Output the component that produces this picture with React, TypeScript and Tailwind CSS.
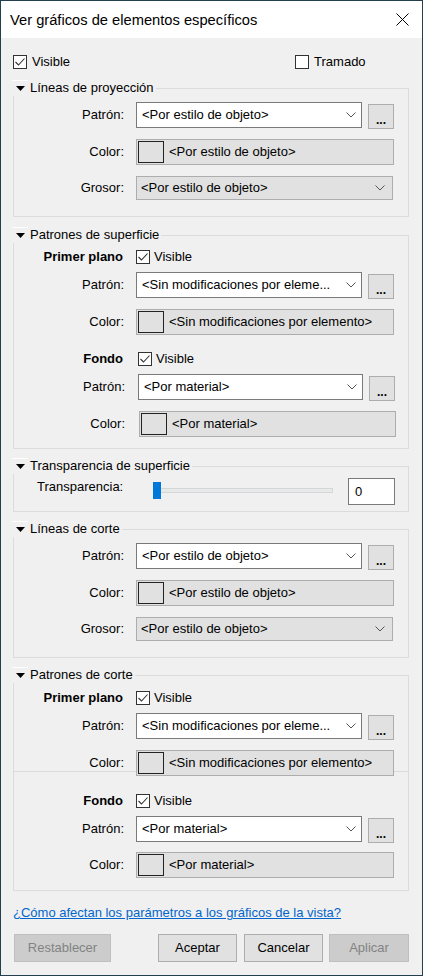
import type { ReactNode } from "react";

const FONT = "font-['Segoe_UI','Liberation_Sans',sans-serif]";

function Check({ checked }: { checked?: boolean }) {
  return (
    <span className="flex h-[14px] w-[14px] shrink-0 items-center justify-center border border-[#333333] bg-white">
      {checked && (
        <svg width="12" height="12" viewBox="0 0 12 12">
          <polyline points="1.5,6 4.5,9 10.5,2.5" fill="none" stroke="#333333" strokeWidth="1.1" />
        </svg>
      )}
    </span>
  );
}

function Chevron() {
  return (
    <svg width="10" height="6" viewBox="0 0 10 6" className="shrink-0">
      <polyline points="0.5,0.5 5,5 9.5,0.5" fill="none" stroke="#555555" strokeWidth="1" />
    </svg>
  );
}

function Group({
  title,
  className = "",
  bodyClass = "",
  children,
}: {
  title: string;
  className?: string;
  bodyClass?: string;
  children: ReactNode;
}) {
  return (
    <div className={`w-[396px] ${className}`}>
      <div className="flex h-[16px] items-center">
        <div className="-ml-px flex h-[16px] w-[16px] items-center justify-center border-t border-white">
          <svg width="9" height="5" viewBox="0 0 9 5">
            <polygon points="0,0 9,0 4.5,5" fill="#000" />
          </svg>
        </div>
        <span className="ml-[2px] whitespace-nowrap pr-[2px] leading-[16px]">{title}</span>
        <div className="mt-[8px] h-[8px] flex-1 border-t border-r border-[#dcdcdc]" />
      </div>
      <div className={`border-x border-b border-[#dcdcdc] ${bodyClass}`}>{children}</div>
    </div>
  );
}

function Label({ children, masked }: { children: ReactNode; masked?: boolean }) {
  return (
    <div className="flex w-[110px] shrink-0 justify-end">
      <div className={masked ? "w-[100px] bg-[#f0f0f0] text-right" : "text-right"}>{children}</div>
    </div>
  );
}

function PatternRow({ value, shift = 0, className = "" }: { value: string; shift?: number; className?: string }) {
  return (
    <div className={`flex h-[26px] items-center ${className}`}>
      <Label>
        <span className={shift ? "mr-[-1px]" : ""}>Patrón:</span>
      </Label>
      <div
        className={`flex h-[26px] items-center justify-between border border-[#7a7a7a] bg-white pl-[5px] pr-[5px] ${
          shift ? "ml-[14px] w-[225px]" : "ml-[12px] w-[226px]"
        }`}
      >
        <span className="whitespace-nowrap">{value}</span>
        <Chevron />
      </div>
      <button className="ml-[6px] mt-[2px] flex h-[25px] w-[26px] items-end justify-center border border-[#adadad] bg-[#e1e1e1] pb-[3px] text-[12px] font-bold leading-[10px]">
        ...
      </button>
    </div>
  );
}

function ColorRow({
  value,
  shift = 0,
  masked,
  className = "",
}: {
  value: string;
  shift?: number;
  masked?: boolean;
  className?: string;
}) {
  return (
    <div className={`flex h-[26px] items-center ${className}`}>
      <Label masked={masked}>
        <span className={shift ? "mr-[-1px]" : ""}>Color:</span>
      </Label>
      <div
        className={`flex h-[26px] items-center border border-[#adadad] bg-[#e1e1e1] pl-[1px] ${
          shift ? "ml-[15px] w-[257px]" : "ml-[12px] w-[258px]"
        }`}
      >
        <span className="h-[22px] w-[26px] shrink-0 border border-[#222222] bg-[#e1e1e1]" />
        <span className="ml-[5px] whitespace-nowrap">{value}</span>
      </div>
    </div>
  );
}

function WeightRow({ className = "" }: { className?: string }) {
  return (
    <div className={`flex h-[24px] items-center ${className}`}>
      <Label>Grosor:</Label>
      <div className="ml-[12px] flex h-[24px] w-[257px] items-center justify-between border border-[#adadad] bg-[#e1e1e1] pl-[4px] pr-[7px]">
        <span className="whitespace-nowrap">&lt;Por estilo de objeto&gt;</span>
        <Chevron />
      </div>
    </div>
  );
}

function LayerHead({ name, className = "", shift = 0 }: { name: string; className?: string; shift?: number }) {
  return (
    <div className={`flex h-[16px] items-center ${className}`}>
      <div className="w-[109px] shrink-0 text-right font-bold">{name}</div>
      <div className={`flex items-center ${shift ? "ml-[15px]" : "ml-[13px]"}`}>
        <Check checked />
        <span className="ml-[4px]">Visible</span>
      </div>
    </div>
  );
}

function Btn({ label, disabled, className = "" }: { label: string; disabled?: boolean; className?: string }) {
  return (
    <button
      className={`flex h-[28px] items-center justify-center border ${
        disabled ? "border-[#bfbfbf] bg-[#cccccc] text-[#838383]" : "border-[#adadad] bg-[#e1e1e1] text-black"
      } ${className}`}
    >
      {label}
    </button>
  );
}

export default function App() {
  return (
    <div className={`h-[977px] w-[425px] bg-white ${FONT} text-[13px] leading-[16px] text-black`}>
      <div className="flex h-[976px] w-[423px] flex-col border border-[#23404f] bg-[#f0f0f0]">
        {/* title bar */}
        <div className="flex h-[37px] shrink-0 items-center justify-between bg-white pl-[9px] pr-[13px]">
          <span className="text-[14.7px] leading-[20px]">Ver gráficos de elementos específicos</span>
          <svg width="13" height="13" viewBox="0 0 13 13">
            <path d="M0.5 0.5 L12.5 12.5 M12.5 0.5 L0.5 12.5" stroke="#000" strokeWidth="1" />
          </svg>
        </div>

        <div className="flex flex-col pl-[12px]">
          <div className="mt-[16px] flex h-[16px] items-center">
            <Check checked />
            <span className="ml-[5px]">Visible</span>
            <div className="ml-[225px] flex items-center">
              <Check />
              <span className="ml-[5px]">Tramado</span>
            </div>
          </div>

          <Group title="Líneas de proyección" className="mt-[10px]" bodyClass="pt-[6px] pb-[16px]">
            <PatternRow value="<Por estilo de objeto>" />
            <ColorRow value="<Por estilo de objeto>" className="mt-[11px]" />
            <WeightRow className="mt-[11px]" />
          </Group>

          <Group title="Patrones de superficie" className="mt-[10px]" bodyClass="pt-[6px] pb-[11px]">
            <LayerHead name="Primer plano" />
            <PatternRow value="<Sin modificaciones por eleme..." className="mt-[7px]" />
            <ColorRow value="<Sin modificaciones por elemento>" className="mt-[11px]" />
            <LayerHead name="Fondo" shift={1} className="mt-[16px]" />
            <PatternRow value="<Por material>" shift={1} className="mt-[7px]" />
            <ColorRow value="<Por material>" shift={1} className="mt-[11px]" />
          </Group>

          <Group title="Transparencia de superficie" className="mt-[9px]" bodyClass="pt-[4px] pb-[6px]">
            <div className="flex h-[27px] items-start">
              <span className="ml-[23px] mt-[1px] w-[116px] whitespace-nowrap">Transparencia:</span>
              <div className="relative mt-[10px] h-[5px] w-[180px] border border-[#d6d6d6] bg-[#e7eaea]">
                <span className="absolute left-[-1px] top-[-7px] h-[17px] w-[8px] bg-[#0078d7]" />
              </div>
              <div className="ml-[15px] flex h-[27px] w-[47px] items-center border border-[#7a7a7a] bg-white pl-[6px]">
                0
              </div>
            </div>
          </Group>

          <Group title="Líneas de corte" className="mt-[9px]" bodyClass="pt-[6px] pb-[16px]">
            <PatternRow value="<Por estilo de objeto>" />
            <ColorRow value="<Por estilo de objeto>" className="mt-[11px]" />
            <WeightRow className="mt-[11px]" />
          </Group>

          <Group title="Patrones de corte" className="mt-[9px]" bodyClass="pt-[7px] pb-[12px]">
            <LayerHead name="Primer plano" />
            <PatternRow value="<Sin modificaciones por eleme..." className="mt-[7px]" />
            <div className="relative mt-[11px]">
              {/* divider running behind the colour row */}
              <div className="absolute left-0 right-0 top-[21px] border-t border-[#dcdcdc]" />
              <ColorRow value="<Sin modificaciones por elemento>" masked className="relative" />
            </div>
            <LayerHead name="Fondo" className="mt-[17px]" />
            <PatternRow value="<Por material>" className="mt-[7px]" />
            <ColorRow value="<Por material>" className="mt-[10px]" />
          </Group>

          <a className="mt-[14px] w-fit text-[#0066cc] underline">
            ¿Cómo afectan los parámetros a los gráficos de la vista?
          </a>

          <div className="mt-[13px] flex w-[396px]">
            <Btn label="Restablecer" disabled className="ml-px w-[97px]" />
            <Btn label="Aceptar" className="ml-[47px] w-[79px]" />
            <Btn label="Cancelar" className="ml-[7px] w-[79px]" />
            <Btn label="Aplicar" disabled className="ml-[6px] w-[80px]" />
          </div>
        </div>
      </div>
    </div>
  );
}
